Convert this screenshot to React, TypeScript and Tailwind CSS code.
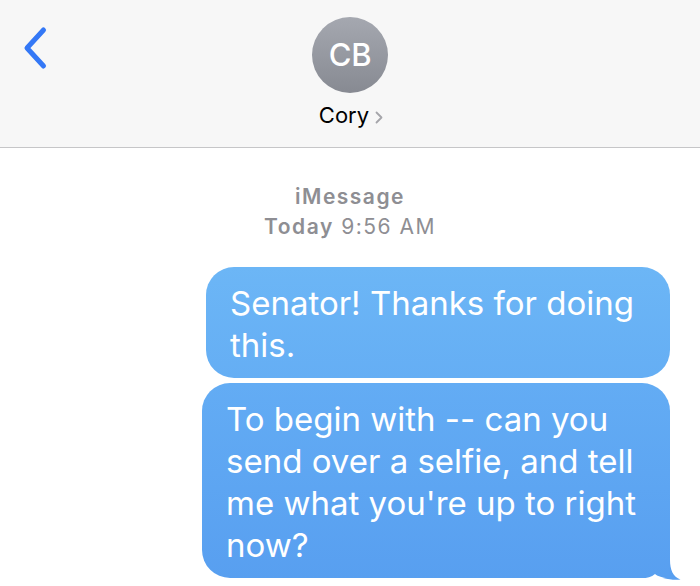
const font = { fontFamily: "Inter, 'Noto Sans', sans-serif" };

function BackChevron() {
  return (
    <svg width="60" height="80" viewBox="0 0 60 80" className="absolute left-0 top-[8px]">
      <path d="M43.5 22 L27 40 L43.5 58" fill="none" stroke="#3478f6" strokeWidth="5" strokeLinecap="round" strokeLinejoin="round" />
    </svg>
  );
}

function Header() {
  return (
    <div className="relative flex h-[148px] flex-col items-center border-b border-[#c6c6c8] bg-[#f7f7f7]">
      <BackChevron />
      <div className="mt-[17px] flex h-[76px] w-[76px] items-center justify-center rounded-full bg-gradient-to-b from-[#a5a8b0] to-[#878a92]">
        <span className="text-[31px] font-medium tracking-[-0.3px] text-white">CB</span>
      </div>
      <div className="mt-[6px] flex items-center gap-[6px] pl-[2px]">
        <span className="text-[22px] text-black">Cory</span>
        <svg width="8" height="13" viewBox="0 0 8 13" className="mt-[3px]">
          <path d="M1.5 1.5 L6.5 6.5 L1.5 11.5" fill="none" stroke="#a5a5aa" strokeWidth="1.8" strokeLinecap="round" strokeLinejoin="round" />
        </svg>
      </div>
    </div>
  );
}

// tail sits on the square bottom-right corner: blue flare outside, white notch cut inside
function Tail() {
  return (
    <svg width="40" height="30" viewBox="0 0 40 30" className="absolute bottom-[-2px] right-[-12px] block">
      <path d="M0 28.2 C5 28.2 9.5 27 13 24 C16.5 26.6 20 27.6 26 28.2 L26 30 L0 30 Z" fill="#ffffff" />
      <path d="M27.6 10 L28 10 C28 20 31 26.5 38.5 29.6 C33 30.2 27 29.6 21 28 L27.6 28 Z" fill="#589ff0" />
    </svg>
  );
}

export default function App() {
  return (
    <div className="min-h-[586px] w-[700px] overflow-hidden bg-white" style={font}>
      <Header />
      <div className="flex flex-col items-center pt-[34px] text-[21px] leading-[30px] tracking-[1.5px] text-[#8e8e93]">
        <div className="font-semibold">iMessage</div>
        <div>
          <span className="font-semibold">Today</span> 9:56 AM
        </div>
      </div>
      <div className="mt-[25px] flex flex-col items-end gap-[5px] pr-[30px] text-[33px] leading-[42px] text-white">
        <div className="w-[464px] rounded-[28px] bg-gradient-to-b from-[#6cb6f6] to-[#65aef4] px-[24px] pb-[12px] pt-[15px]">
          Senator! Thanks for doing this.
        </div>
        <div className="relative w-[468px] rounded-[28px] rounded-br-none bg-gradient-to-b from-[#63acf4] to-[#589ff0] px-[24px] pb-[12px] pt-[15px]">
          To begin with -- can you send over a selfie, and tell me what you're up to right now?
          <Tail />
        </div>
      </div>
    </div>
  );
}
